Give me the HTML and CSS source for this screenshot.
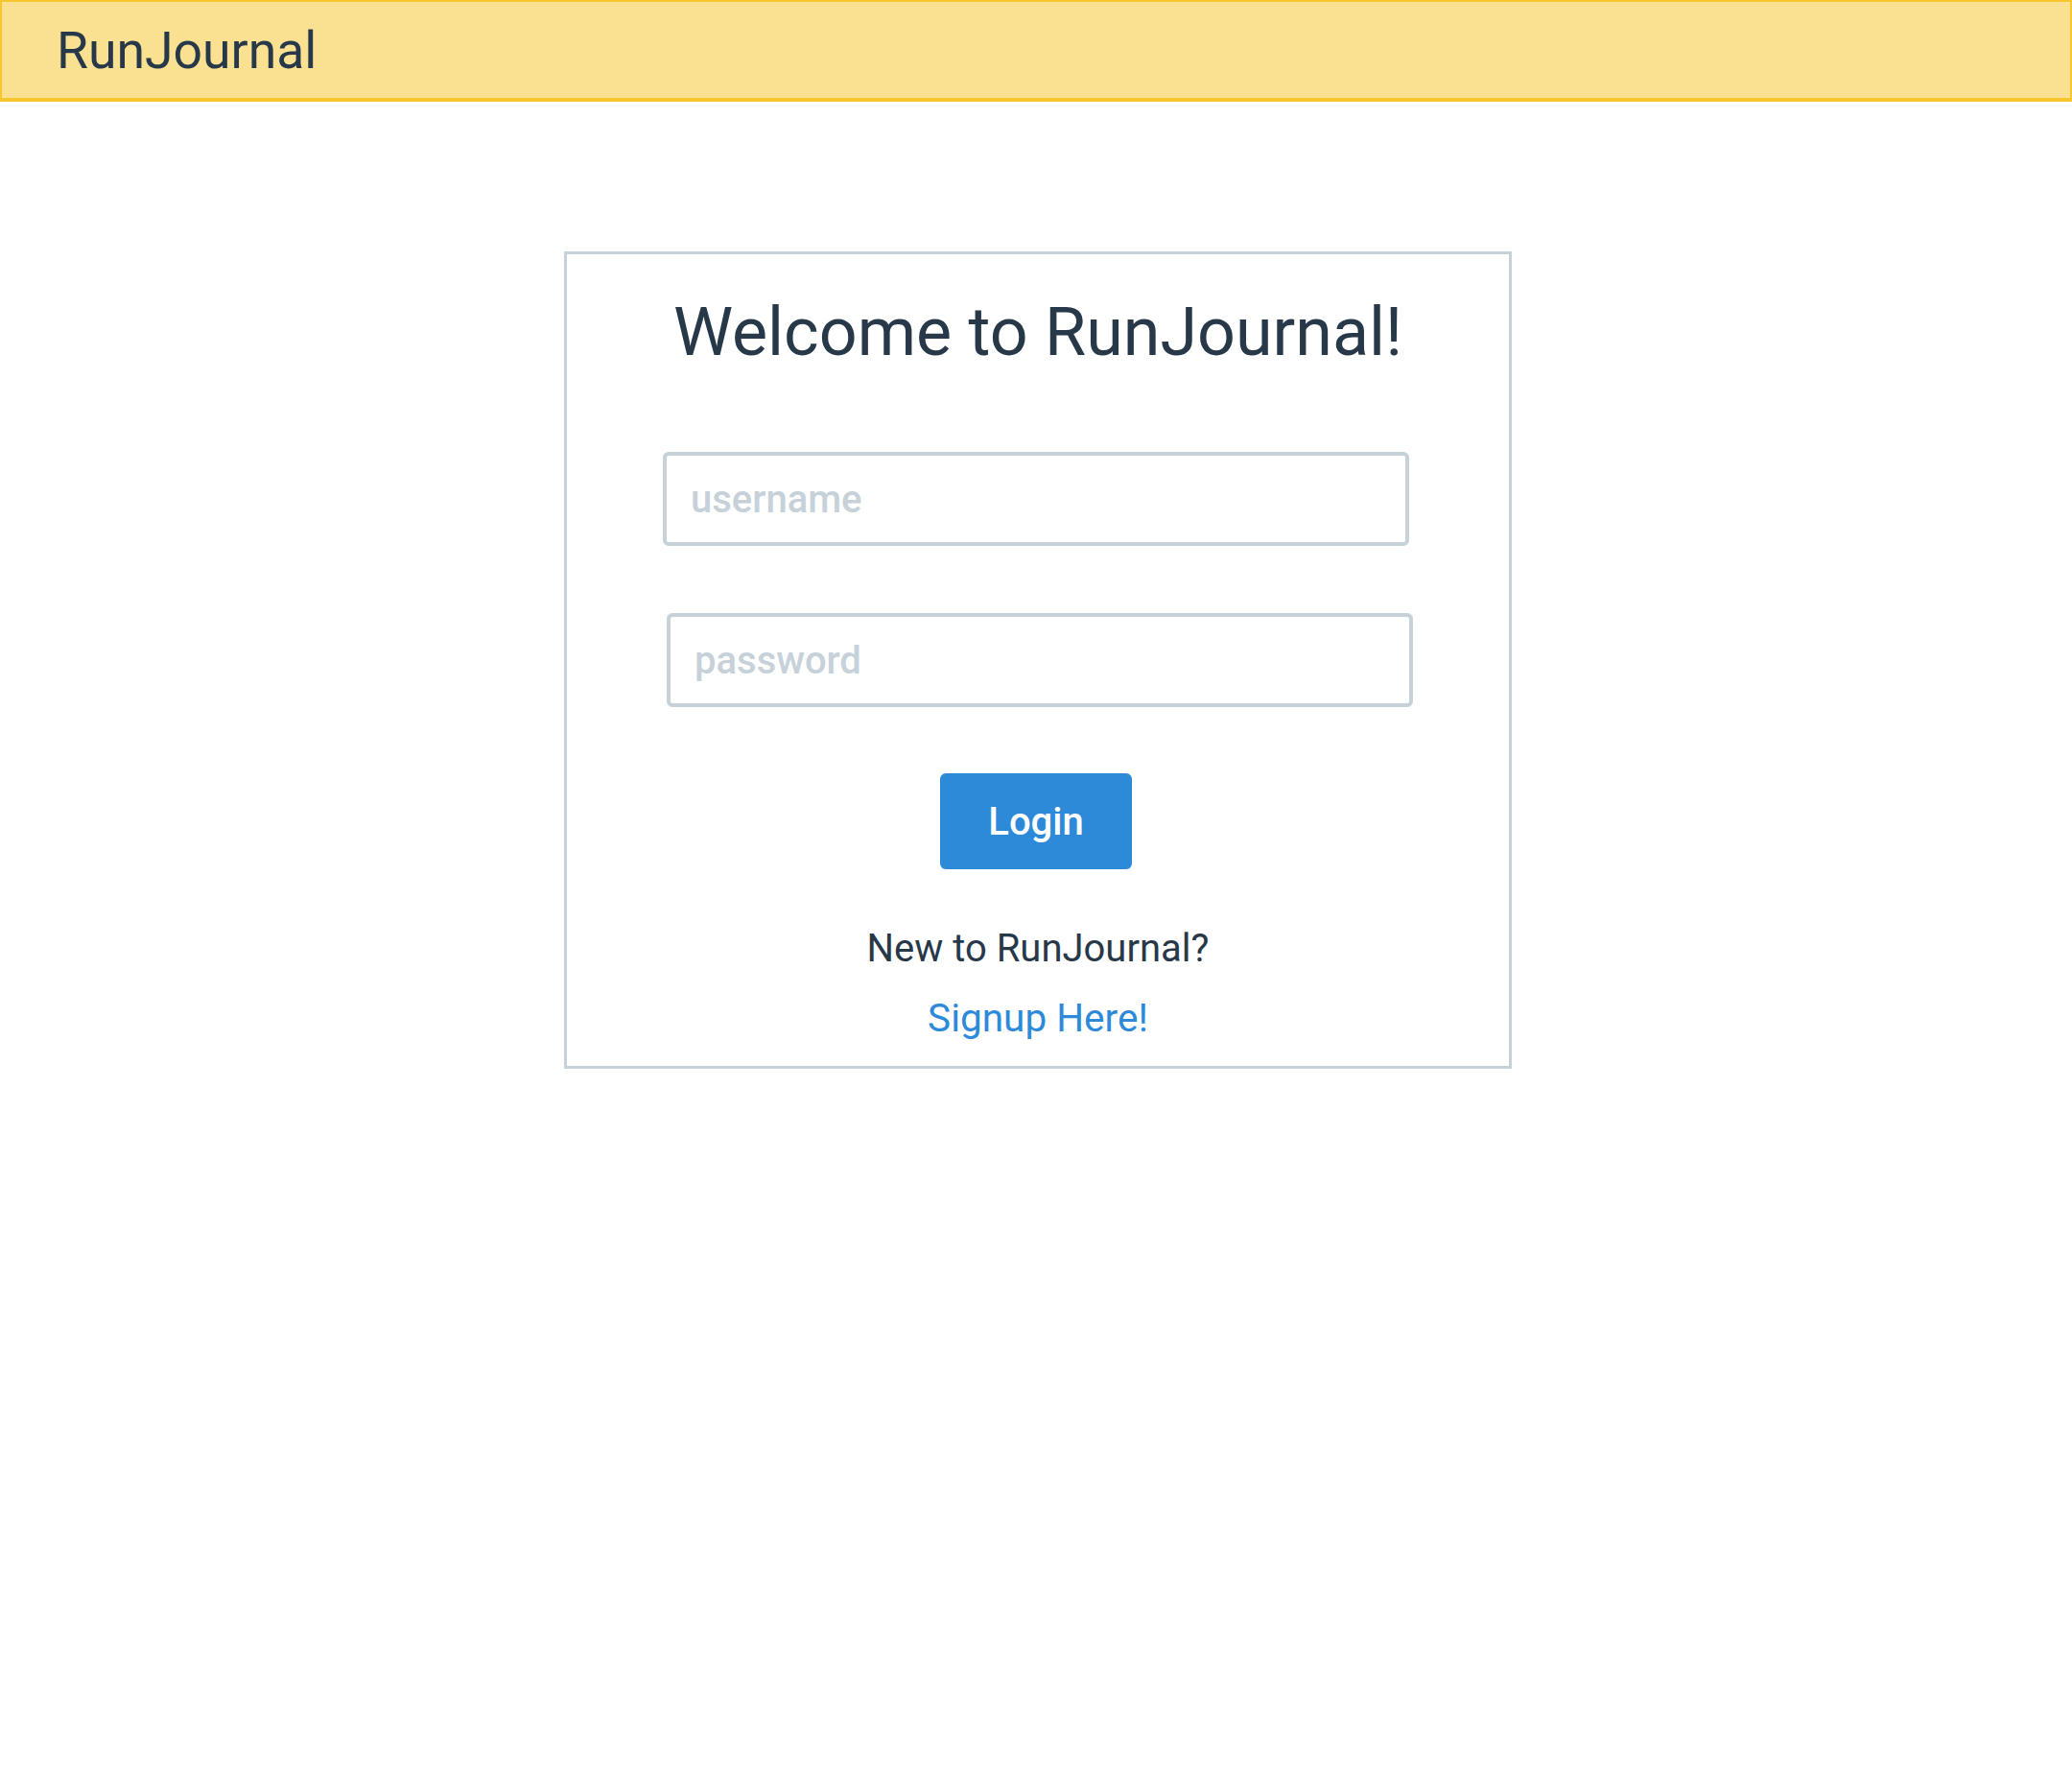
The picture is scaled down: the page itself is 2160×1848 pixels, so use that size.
FILE: index.html
```html
<!DOCTYPE html>
<html lang="en">
<head>
<meta charset="utf-8">
<title>RunJournal</title>
<link rel="stylesheet" href="styles.css">
</head>
<body>
  <header class="topbar">
    <span class="brand">RunJournal</span>
  </header>
  <main class="page">
    <section class="card">
      <h1 class="title">Welcome to RunJournal!</h1>
      <form class="form">
        <input class="field field-user" type="text" placeholder="username">
        <input class="field field-pass" type="password" placeholder="password">
        <button class="btn" type="button">Login</button>
      </form>
      <p class="note">New to RunJournal?</p>
      <a class="link" href="#">Signup Here!</a>
    </section>
  </main>
</body>
</html>
```

FILE: styles.css
```css
* { box-sizing: border-box; }
html, body { margin: 0; padding: 0; background: #ffffff; }
body {
  font-family: Roboto, "Liberation Sans", sans-serif;
  color: #273849;
}
.topbar {
  background: #fae192;
  border: 2px solid #f8c52b;
  border-bottom-width: 4px;
  padding: 20px 0 18px 57px;
  height: 106px;
}
.brand {
  font-size: 53.5px;
  line-height: 62px;
  display: block;
  color: #273849;
}
.page {
  display: flex;
  justify-content: center;
  padding: 156px 0 0 4px;
}
.card {
  width: 988px;
  border: 3px solid #c6d1da;
  display: flex;
  flex-direction: column;
  align-items: center;
  padding: 41px 0 26px;
}
.title {
  margin: 0;
  font-size: 70px;
  font-weight: 400;
  line-height: 80px;
}
.form {
  display: flex;
  flex-direction: column;
  align-items: center;
  margin-top: 85px;
}
.field {
  width: 778px;
  height: 98px;
  border: 4px solid #c6d1da;
  border-radius: 6px;
  padding: 0 0 0 25px;
  font-family: Roboto, "Liberation Sans", sans-serif;
  font-size: 40px;
  font-weight: 500;
  color: #273849;
  outline: none;
  background: #fff;
}
.field::placeholder { color: #c6d1da; opacity: 1; }
.field-user { transform: translateX(-2px); }
.field-pass { margin-top: 70px; transform: translateX(2px); }
.btn {
  margin-top: 69px;
  width: 200px;
  height: 100px;
  border: none;
  border-radius: 6px;
  background: #2d8ad9;
  color: #ffffff;
  font-family: Roboto, "Liberation Sans", sans-serif;
  font-size: 40px;
  font-weight: 500;
  transform: translateX(-2px);
}
.note {
  margin: 59px 0 0;
  font-size: 40px;
  line-height: 48px;
}
.link {
  margin-top: 24px;
  font-size: 40.5px;
  line-height: 48px;
  color: #2d8ad9;
  text-decoration: none;
}
```
